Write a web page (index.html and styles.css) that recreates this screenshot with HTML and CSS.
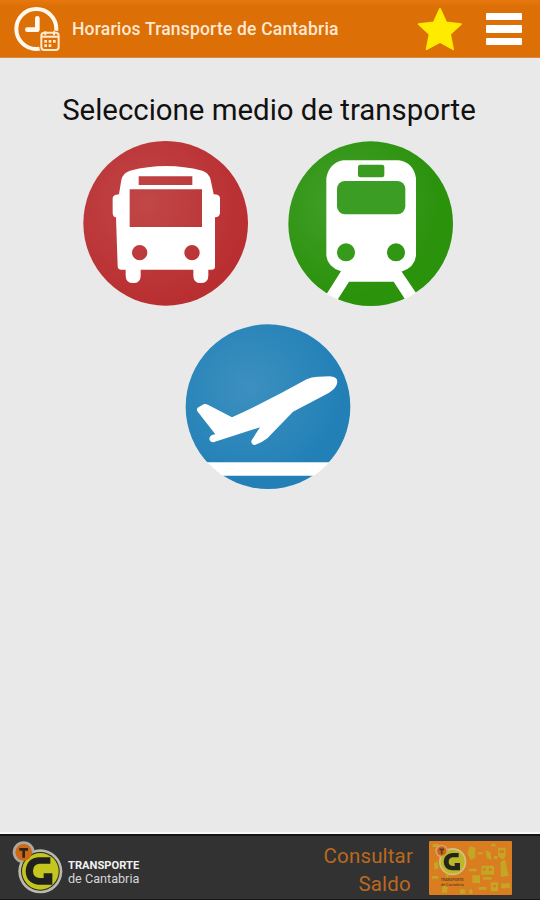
FILE: index.html
```html
<!DOCTYPE html>
<html lang="es">
<head>
<meta charset="utf-8">
<title>Horarios Transporte de Cantabria</title>
<link rel="stylesheet" href="styles.css">
</head>
<body>
<header class="topbar">
  <svg class="clock" viewBox="0 0 144 144">
    <circle cx="67" cy="69" r="60" fill="none" stroke="#fff8ee" stroke-width="12"/>
    <path d="M70 37V71H40" fill="none" stroke="#fff8ee" stroke-width="14" stroke-linecap="round" stroke-linejoin="round"/>
    <rect x="76" y="74" width="62" height="62" rx="12" fill="#dc7007"/>
    <rect x="82" y="80" width="52" height="52" rx="9" fill="#dc7007" stroke="#ffe9d0" stroke-width="6"/>
    <path d="M82 92H134M94 76V88M120 76V88" stroke="#ffe9d0" stroke-width="6"/>
    <path d="M91 106H126M91 119H117" stroke="#ffe9d0" stroke-width="8" stroke-dasharray="8 5"/>
  </svg>
  <h1 class="title">Horarios Transporte de Cantabria</h1>
  <svg class="star" viewBox="0 0 140 140">
    <path d="M70 8L89 50L134 55L101 86L110 132L70 110L29 132L38 86L5 55L51 50Z" fill="#ffeb00" stroke="#ffeb00" stroke-width="5" stroke-linejoin="round"/>
  </svg>
  <div class="menu"><span></span><span></span><span></span></div>
</header>
<main class="content">
  <h2 class="prompt">Seleccione medio de transporte</h2>
  <div class="modes">
    <svg class="mode" viewBox="0 0 540 540">
      <defs><radialGradient id="red" cx=".38" cy=".38" r=".62"><stop offset="0" stop-color="#c14747"/><stop offset="1" stop-color="#b92e31"/></radialGradient></defs>
      <circle cx="269" cy="268" r="247" fill="url(#red)"/>
      <path fill="#fff" fill-rule="evenodd" d="M136 138Q140 117 162 110Q270 82 379 110Q400 117 404 138L413 181Q432 181 432 193V236Q432 248 417 250V398Q417 407 407 407H397V425Q397 447 374 447Q352 447 352 425V407H194V425Q194 447 172 447Q149 447 149 425V407H136Q125 407 125 396L120 250Q110 248 110 236V193Q110 183 129 181ZM188 127V153H349V127ZM161 166V279H378V166ZM214 356A23 23 0 1 0 168 356A23 23 0 1 0 214 356ZM371 356A23 23 0 1 0 325 356A23 23 0 1 0 371 356Z"/>
    </svg>
    <svg class="mode" viewBox="0 0 540 540">
      <defs><radialGradient id="green" cx=".36" cy=".38" r=".56"><stop offset="0" stop-color="#44a02d"/><stop offset="1" stop-color="#2b920c"/></radialGradient><clipPath id="disc"><circle cx="272" cy="269" r="248"/></clipPath></defs>
      <circle cx="272" cy="269" r="247" fill="url(#green)"/>
      <g clip-path="url(#disc)">
        <path fill="#fff" d="M183 412L126 502L166 508L207 443H341L386 512L425 502L364 412Z"/>
      </g>
      <path fill="#fff" d="M190 79H357Q400 86 408 132V365Q404 400 364 413V416H183V412Q143 399 139 365V132Q147 87 190 79Z"/>
      <rect x="234" y="92" width="79" height="38" rx="7" fill="#399b20"/>
      <rect x="171" y="141" width="205" height="100" rx="24" fill="#3c9d24"/>
      <circle cx="198" cy="355" r="27" fill="#369a1b"/>
      <circle cx="348" cy="355" r="27" fill="#309613"/>
    </svg>
    <svg class="mode" viewBox="0 0 540 540">
      <defs><radialGradient id="blue" cx=".38" cy=".38" r=".58"><stop offset="0" stop-color="#3c90bf"/><stop offset="1" stop-color="#2280b7"/></radialGradient></defs>
      <circle cx="270" cy="272" r="247" fill="url(#blue)"/>
      <path fill="#fff" d="M86 439H454Q432 464 407 479H133Q107 462 86 439Z"/>
      <path fill="#fff" d="M59 275L78 264Q85 263 91 267L162 304Q275 252 386 190Q402 181 423 182L454 181Q478 182 478 197Q477 215 452 231L345 287L268 367Q249 382 231 387Q219 387 220 374L246 334L106 379Q95 378 94 369Q94 357 112 355L58 286Q55 280 59 275Z"/>
    </svg>
  </div>
</main>
<footer class="bottombar">
  <svg class="brand" viewBox="0 0 435 180">
    <circle cx="121" cy="106" r="66" fill="#b9b9af"/>
    <circle cx="71" cy="49" r="33" fill="#aaa9a0"/>
    <circle cx="121" cy="106" r="58" fill="#252719"/>
    <circle cx="121" cy="106" r="55" fill="#c4c51e"/>
    <circle cx="71" cy="49" r="25" fill="#cc6816"/>
    <path d="M151 64V83H118Q99 86 99 105Q99 124 118 126H131V112H157V146H115Q78 142 77 105Q79 68 115 64Z" fill="#20211f"/>
    <path d="M58 40H84M71 40V65" stroke="#322318" stroke-width="8"/>
    <text x="204" y="98" class="brand-name" textLength="214" lengthAdjust="spacingAndGlyphs">TRANSPORTE</text>
    <text x="204" y="140" class="brand-region" textLength="214" lengthAdjust="spacingAndGlyphs">de Cantabria</text>
  </svg>
  <div class="balance">Consultar<br>Saldo&#8202;</div>
  <svg class="card" viewBox="0 0 249 162">
    <rect width="249" height="162" rx="3" fill="#d97d20"/>
    <g fill="#c4a526">
      <path d="M122 16L139 20V50L126 58L115 38ZM169 27L184 34L188 58L174 51ZM207 20H230V45L221 56L207 45ZM214 64L228 55L239 104L216 108ZM157 74H195V101H157ZM130 103H153V126H130ZM185 124H207V151H185ZM42 132L55 139V155H38ZM93 145H109V158H93ZM15 66L26 61L29 82L16 86ZM217 127H243V142H217ZM11 9H29V18H11Z"/>
      <path d="M146 34H161V40H146ZM162 108H188V116H162ZM119 83H143V91H119ZM195 45H206V54H195ZM149 138H172V146H149ZM8 105H28V113H8ZM50 100H59V108H50ZM187 8H200V16H187ZM121 145H130V158H121Z"/>
    </g>
    <path d="M162 82H170V89H162ZM179 82H188V89H179ZM211 28H225V36H211ZM192 132H201V139H192Z" fill="#d97d20"/>
    <circle cx="71" cy="62" r="41" fill="#d6bf80"/>
    <circle cx="38" cy="30" r="19" fill="#dca16b"/>
    <circle cx="71" cy="62" r="36" fill="#bbb72a"/>
    <circle cx="38" cy="30" r="14" fill="#ca6520"/>
    <path d="M89 36V49H71Q59 51 59 62Q59 73 71 75H77V66H93V88H69Q45 85 44 62Q45 39 69 36Z" fill="#25251b"/>
    <path d="M31 25H45M38 25V40" stroke="#613617" stroke-width="5"/>
    <text x="35" y="121" class="card-name" textLength="69" lengthAdjust="spacingAndGlyphs">TRANSPORTE</text>
    <text x="35" y="135" class="card-region" textLength="69" lengthAdjust="spacingAndGlyphs">de Cantabria</text>
  </svg>
</footer>
</body>
</html>
```
FILE: styles.css
```css
* { box-sizing: border-box; }
body {
  margin: 0;
  width: 540px;
  height: 900px;
  overflow: hidden;
  display: flex;
  flex-direction: column;
  background: #e9e9e9;
  font-family: Roboto, sans-serif;
}
.topbar {
  height: 58px;
  flex: none;
  display: flex;
  align-items: center;
  padding: 0 18px 0 14px;
  background: linear-gradient(#e7780d, #dc6f06 7px);
  border-bottom: 1px solid #d98840;
}
.clock { width: 48px; height: 48px; margin-top: 3px; }
.title {
  margin: 0 0 0 10px;
  flex: 1;
  color: #ffe9d4;
  font-size: 17.5px;
  font-weight: 500;
  letter-spacing: .19px;
  line-height: 24px;
  white-space: nowrap;
}
.star { width: 46px; height: 46px; margin-right: 23px; margin-top: 1px; }
.menu { width: 36px; display: flex; flex-direction: column; gap: 5px; margin-top: 1px; }
.menu span { height: 7.4px; border-radius: 1px; background: #fff; }
.content { flex: 1; display: flex; flex-direction: column; align-items: center; }
.prompt {
  margin: 34px 0 0;
  padding-right: 2px;
  height: 42px;
  color: #111;
  font-size: 29.4px;
  font-weight: 400;
  line-height: 36px;
  white-space: nowrap;
}
.modes {
  width: 384px;
  margin-right: 4px;
  display: flex;
  flex-wrap: wrap;
  justify-content: center;
  gap: 2px 24px;
}
.mode { width: 180px; height: 180px; }
.bottombar {
  height: 68px;
  flex: none;
  display: flex;
  align-items: flex-start;
  background: #323232;
  border-top: 2px solid #f7f7f7;
  border-bottom: 1px solid #161616;
  box-shadow: inset 0 2px #151515;
}
.brand { width: 145px; height: 60px; margin-top: 2px; }
.brand-name { font: 700 33px Roboto, sans-serif; fill: #f1f1f1; }
.brand-region { font: 400 37px Roboto, sans-serif; fill: #d5d5d5; }
.balance {
  margin-left: auto;
  padding-top: 8px;
  text-align: right;
  color: #ba691f;
  font-size: 20.5px;
  letter-spacing: .15px;
  line-height: 28px;
}
.card { width: 83px; height: 54px; margin: 7px 28px 0 16px; }
.card-name { font: 700 12px Roboto, sans-serif; fill: #70451b; }
.card-region { font: 500 12px Roboto, sans-serif; fill: #70451b; }
```
